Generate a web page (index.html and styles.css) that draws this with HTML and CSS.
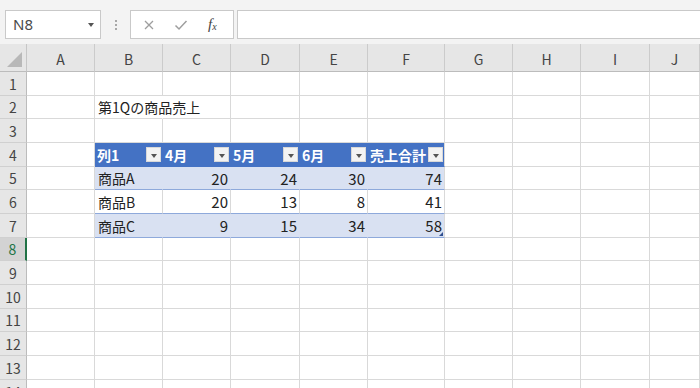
FILE: index.html
```html
<!DOCTYPE html>
<html lang="ja">
<head>
<meta charset="utf-8">
<link rel="stylesheet" href="styles.css">
</head>
<body>
<div class="toolbar">
  <div class="namebox"><span class="nb-text">N8</span><span class="nb-caret"></span></div>
  <div class="dots"><span></span><span></span><span></span></div>
  <div class="fbtns">
    <svg class="ic" width="12" height="12" viewBox="0 0 12 12"><path d="M2 2 L10 10 M10 2 L2 10" stroke="#9e9e9e" stroke-width="1.3" fill="none"/></svg>
    <svg class="ic" width="14" height="12" viewBox="0 0 14 12"><path d="M1.5 6.5 L5 10 L12.5 2" stroke="#9e9e9e" stroke-width="1.5" fill="none"/></svg>
    <span class="fx"><i>f</i><sub>x</sub></span>
  </div>
  <div class="finput"></div>
</div>
<table class="sheet">
  <colgroup>
    <col class="w27"><col class="w68"><col class="w68"><col class="w68"><col class="w69"><col class="w68"><col class="w77"><col class="w68"><col class="w68"><col class="w69"><col class="w50">
  </colgroup>
  <thead>
    <tr class="hr">
      <th class="corner"><span class="tri"></span></th>
      <th class="col">A</th><th class="col">B</th><th class="col">C</th><th class="col">D</th><th class="col">E</th><th class="col">F</th><th class="col">G</th><th class="col">H</th><th class="col">I</th><th class="col">J</th>
    </tr>
  </thead>
  <tbody>
    <tr class="r24"><th class="row">1</th><td></td><td></td><td></td><td></td><td></td><td></td><td></td><td></td><td></td><td></td></tr>
    <tr class="r23"><th class="row">2</th><td></td><td class="over">第1Qの商品売上</td><td></td><td></td><td></td><td></td><td></td><td></td><td></td><td></td></tr>
    <tr class="r24"><th class="row">3</th><td></td><td></td><td></td><td></td><td></td><td></td><td></td><td></td><td></td><td></td></tr>
    <tr class="r24"><th class="row">4</th><td></td>
      <td class="h"><div class="hd"><span>列1</span><span class="dd"></span></div></td>
      <td class="h"><div class="hd"><span>4月</span><span class="dd"></span></div></td>
      <td class="h"><div class="hd"><span>5月</span><span class="dd"></span></div></td>
      <td class="h"><div class="hd"><span>6月</span><span class="dd"></span></div></td>
      <td class="h last"><div class="hd"><span>売上合計</span><span class="dd"></span></div></td>
      <td></td><td></td><td></td><td></td></tr>
    <tr class="r23"><th class="row">5</th><td></td>
      <td class="b1">商品A</td><td class="b1 n">20</td><td class="b1 n">24</td><td class="b1 n">30</td><td class="b1 n last">74</td>
      <td></td><td></td><td></td><td></td></tr>
    <tr class="r24"><th class="row">6</th><td></td>
      <td class="b0">商品B</td><td class="b0 n">20</td><td class="b0 n">13</td><td class="b0 n">8</td><td class="b0 n last">41</td>
      <td></td><td></td><td></td><td></td></tr>
    <tr class="r24"><th class="row">7</th><td></td>
      <td class="b1">商品C</td><td class="b1 n">9</td><td class="b1 n">15</td><td class="b1 n">34</td><td class="b1 n last">58<span class="handle"></span></td>
      <td></td><td></td><td></td><td></td></tr>
    <tr class="r23"><th class="row sel">8</th><td></td><td></td><td></td><td></td><td></td><td></td><td></td><td></td><td></td><td></td></tr>
    <tr class="r24"><th class="row">9</th><td></td><td></td><td></td><td></td><td></td><td></td><td></td><td></td><td></td><td></td></tr>
    <tr class="r24"><th class="row">10</th><td></td><td></td><td></td><td></td><td></td><td></td><td></td><td></td><td></td><td></td></tr>
    <tr class="r23"><th class="row">11</th><td></td><td></td><td></td><td></td><td></td><td></td><td></td><td></td><td></td><td></td></tr>
    <tr class="r24"><th class="row">12</th><td></td><td></td><td></td><td></td><td></td><td></td><td></td><td></td><td></td><td></td></tr>
    <tr class="r24"><th class="row">13</th><td></td><td></td><td></td><td></td><td></td><td></td><td></td><td></td><td></td><td></td></tr>
    <tr class="r24"><th class="row">14</th><td></td><td></td><td></td><td></td><td></td><td></td><td></td><td></td><td></td><td></td></tr>
  </tbody>
</table>
</body>
</html>
```
FILE: styles.css
```css
html, body {
  margin: 0;
  padding: 0;
}
body {
  width: 700px;
  height: 388px;
  overflow: hidden;
  background: #fff;
  font-family: "Noto Sans CJK JP", "Noto Sans", sans-serif;
}

/* formula bar */
.toolbar {
  height: 44px;
  box-sizing: border-box;
  padding-top: 10px;
  background: #f3f3f3;
  display: flex;
  align-items: flex-start;
}
.namebox {
  margin-left: 5px;
  width: 96px;
  height: 29px;
  box-sizing: border-box;
  border: 1px solid #c9c9c9;
  background: #fff;
  display: flex;
  align-items: center;
  justify-content: space-between;
  padding: 0 6px 0 7px;
}
.nb-text {
  font-family: "Noto Sans", sans-serif;
  font-size: 15px;
  color: #4a4a4a;
  line-height: 1;
}
.nb-caret {
  width: 0;
  height: 0;
  border-left: 3.5px solid transparent;
  border-right: 3.5px solid transparent;
  border-top: 4px solid #555;
}
.dots {
  width: 29px;
  height: 29px;
  display: flex;
  flex-direction: column;
  align-items: center;
  justify-content: center;
  gap: 2px;
}
.dots span {
  width: 2px;
  height: 2px;
  background: #a8a8a8;
}
.fbtns {
  width: 104px;
  height: 29px;
  box-sizing: border-box;
  border: 1px solid #c9c9c9;
  background: #fff;
  display: flex;
  align-items: center;
  padding-left: 12px;
  gap: 19px;
}
.fx {
  font-family: "Liberation Serif", serif;
  font-size: 15px;
  color: #444;
  line-height: 1;
  margin-left: 1px;
}
.fx sub {
  font-size: 10px;
  font-style: italic;
  vertical-align: -1px;
}
.finput {
  flex: 1;
  margin-left: 3px;
  margin-right: -3px;
  height: 29px;
  box-sizing: border-box;
  border: 1px solid #c9c9c9;
  background: #fff;
}

/* sheet */
.sheet {
  table-layout: fixed;
  width: 700px;
  border-collapse: separate;
  border-spacing: 0;
  background: #fff;
}
.w27 { width: 27px; }
.w50 { width: 50px; }
.w68 { width: 68px; }
.w69 { width: 69px; }
.w77 { width: 77px; }

.sheet th, .sheet td {
  box-sizing: border-box;
  padding: 0 3px 0 3px;
  border-right: 1px solid #d9d9d9;
  border-bottom: 1px solid #d9d9d9;
  font-size: 14px;
  line-height: 1;
  color: #222;
  white-space: nowrap;
  overflow: visible;
  vertical-align: middle;
}
.hr th { height: 28px; }
.r24 th, .r24 td { height: 24px; }
.r23 th, .r23 td { height: 23px; }

.corner {
  background: #e6e6e6;
  position: relative;
  border-right: 1px solid #c6c6c6 !important;
  border-bottom: 1px solid #bcbcbc !important;
}
.tri {
  position: absolute;
  right: 4px;
  bottom: 4px;
  width: 0;
  height: 0;
  border-left: 15px solid transparent;
  border-bottom: 15px solid #b8b8b8;
}
.col {
  background: #e6e6e6;
  font-weight: normal;
  font-size: 13px;
  color: #444 !important;
  text-align: center;
  border-right: 1px solid #cbcbcb !important;
  border-bottom: 1px solid #bcbcbc !important;
  padding-top: 3px !important;
}
.row {
  background: #e6e6e6;
  font-weight: normal;
  font-size: 14px !important;
  color: #444 !important;
  text-align: center;
  padding: 0 !important;
  border-right: 1px solid #bcbcbc !important;
  border-bottom: 1px solid #d0d0d0 !important;
}
.row.sel {
  background: #d3d3d3;
  color: #217346 !important;
  border-right: 2px solid #217346 !important;
}

.over {
  border-right-color: transparent !important;
}

/* excel table */
.h {
  background: #4472c4;
  color: #fff !important;
  font-weight: bold;
  border-right-color: #4472c4 !important;
  border-bottom-color: #4472c4 !important;
  padding: 0 1px 0 2px !important;
}
.hd {
  display: flex;
  align-items: center;
  justify-content: space-between;
}
.dd {
  width: 15px;
  height: 15px;
  box-sizing: border-box;
  background: #f3f3f3;
  border: 1px solid #d8d8d8;
  display: flex;
  align-items: center;
  justify-content: center;
  position: relative;
}
.dd::after {
  content: "";
  width: 0;
  height: 0;
  margin-top: 2px;
  border-left: 3px solid transparent;
  border-right: 3px solid transparent;
  border-top: 4px solid #555;
}
.b1 {
  background: #d9e1f2;
  border-right-color: #d9e1f2 !important;
  border-bottom: 1px solid #8ea9db !important;
}
.b0 {
  border-bottom: 1px solid #8ea9db !important;
}
.sheet td.last {
  border-right-color: #d9d9d9 !important;
}
.n {
  text-align: right;
  padding-right: 2px !important;
  font-size: 15px !important;
}
.b1.last {
  position: relative;
}
.handle {
  position: absolute;
  right: 1px;
  bottom: 1px;
  width: 0;
  height: 0;
  border-left: 4px solid transparent;
  border-bottom: 4px solid #2f4f8f;
}
.b1, .b0 { color: #222; padding-left: 3px; }
```
